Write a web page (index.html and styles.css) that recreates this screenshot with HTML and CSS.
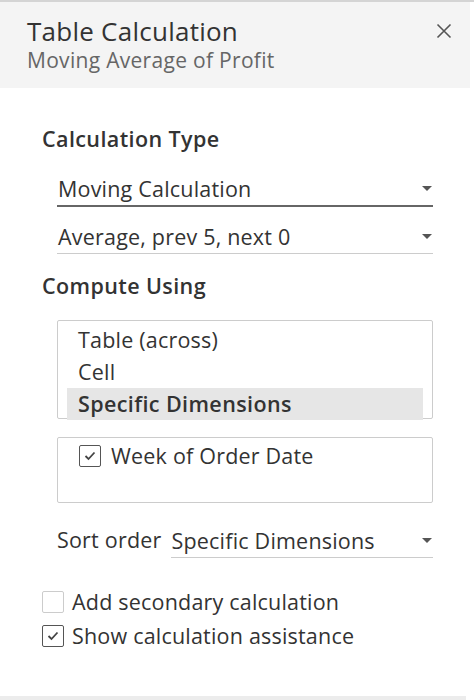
FILE: index.html
```html
<!DOCTYPE html>
<html>
<head>
<meta charset="utf-8">
<link rel="stylesheet" href="styles.css">
</head>
<body>
<div class="panel">
  <div class="header">
    <div class="titles">
      <div class="title">Table Calculation</div>
      <div class="subtitle">Moving Average of Profit</div>
    </div>
    <svg class="close" width="16" height="16" viewBox="0 0 16 16"><path d="M1.5 1.5 L14.5 14.5 M14.5 1.5 L1.5 14.5" stroke="#555" stroke-width="1.6" fill="none"/></svg>
  </div>
  <div class="body">
    <div class="section-title">Calculation Type</div>
    <div class="select dark"><span>Moving Calculation</span><i class="caret"></i></div>
    <div class="select"><span>Average, prev 5, next 0</span><i class="caret"></i></div>
    <div class="section-title second">Compute Using</div>
    <div class="listbox">
      <div class="item">Table (across)</div>
      <div class="item">Cell</div>
      <div class="item selected">Specific Dimensions</div>
    </div>
    <div class="dims">
      <label class="dim"><span class="check on"><svg width="12" height="10" viewBox="0 0 12 10"><path d="M1.5 5 L4.5 8 L10.5 1.5" stroke="#444" stroke-width="1.8" fill="none"/></svg></span>Week of Order Date</label>
    </div>
    <div class="sort">
      <span class="sort-label">Sort order</span>
      <div class="select sort-select"><span>Specific Dimensions</span><i class="caret"></i></div>
    </div>
    <div class="options">
      <label class="opt"><span class="check light"></span>Add secondary calculation</label>
      <label class="opt"><span class="check on"><svg width="12" height="10" viewBox="0 0 12 10"><path d="M1.5 5 L4.5 8 L10.5 1.5" stroke="#444" stroke-width="1.8" fill="none"/></svg></span>Show calculation assistance</label>
    </div>
  </div>
  <div class="footer"></div>
</div>
</body>
</html>
```
FILE: styles.css
```css
html, body { margin: 0; padding: 0; background: #fff; }
body { font-family: "Open Sans", Lato, sans-serif; color: #333; }
.panel { width: 474px; height: 700px; display: flex; flex-direction: column; border-top: 2px solid #d4d4d4; box-sizing: border-box; }
.header { background: #f4f4f4; height: 86px; display: flex; justify-content: space-between; align-items: flex-start; padding: 0 18px 0 27px; margin-right: 4px; }
.titles { padding-top: 14px; }
.title { font-size: 26px; line-height: 30px; color: #333; letter-spacing: 0.25px; }
.subtitle { font-size: 21px; line-height: 26px; color: #666; margin-top: 1px; letter-spacing: 0.3px; }
.close { margin-top: 21px; }
.body { flex: 1; padding: 38px 41px 0 42px; }
.section-title { font-size: 21.5px; font-weight: 600; color: #333; line-height: 26px; letter-spacing: 0.4px; }
.section-title.second { margin-top: 19px; }
.select { margin: 14px 0 0 15px; display: flex; justify-content: space-between; align-items: center; border-bottom: 1px solid #ccc; height: 34px; padding-left: 1px; font-size: 21.5px; color: #333; letter-spacing: 0.2px; }
.select.dark { border-bottom: 2px solid #666; height: 34px; margin-top: 19px; }
.select + .select { margin-top: 12px; }
.caret { width: 0; height: 0; border-left: 5px solid transparent; border-right: 5px solid transparent; border-top: 5px solid #555; margin-right: 1px; }
.listbox { margin: 21px 0 0 15px; border: 1px solid #ccc; border-radius: 2px; padding: 3px 9px 1px 9px; height: 99px; box-sizing: border-box; }
.item { font-size: 21.5px; line-height: 32px; padding-left: 11px; color: #333; letter-spacing: 0.2px; }
.item.selected { font-weight: 600; background: #e6e6e6; letter-spacing: 0.4px; }
.dims { margin: 18px 0 0 15px; border: 1px solid #ccc; border-radius: 2px; height: 66px; box-sizing: border-box; padding: 5px 0 0 21px; }
.dim, .opt { display: flex; align-items: center; font-size: 21.5px; color: #333; line-height: 26px; letter-spacing: 0.2px; }
.check { width: 22px; height: 22px; border: 1.5px solid #555; border-radius: 2px; box-sizing: border-box; display: flex; align-items: center; justify-content: center; margin-right: 10px; }
.check.light { border-color: #ccc; }
.dim .check { margin-right: 10px; }
.sort { display: flex; align-items: center; margin: 20px 0 0 15px; }
.sort-label { font-size: 21.5px; color: #333; margin-right: 9px; margin-top: -2px; letter-spacing: 0.2px; }
.sort-select { flex: 1; margin: 0; }
.options { margin-top: 31px; display: flex; flex-direction: column; gap: 8px; }
.opt .check { margin-right: 8px; }
.footer { height: 4px; background: #ececec; margin-right: 8px; }
```
